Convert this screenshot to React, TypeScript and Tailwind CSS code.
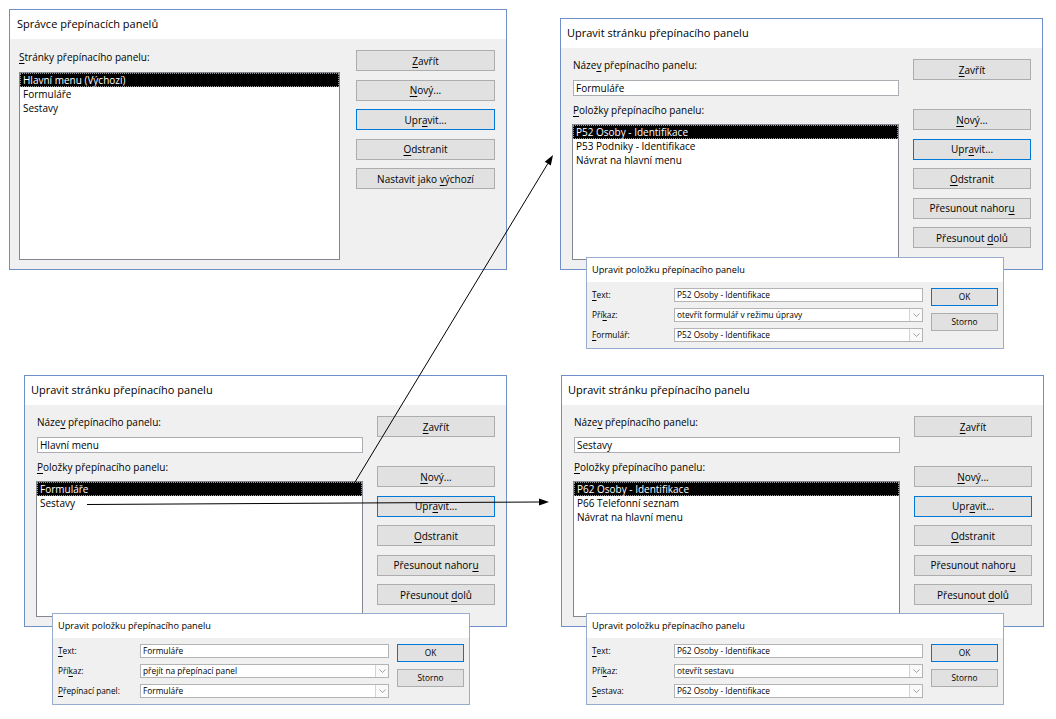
import React from "react";

const FONT = "font-['Open_Sans','Noto_Sans',sans-serif]";

function Mn({ t }: { t: string }) {
  const i = t.indexOf("&");
  if (i < 0) return <>{t}</>;
  return (
    <>
      {t.slice(0, i)}
      <span className="underline underline-offset-[1.5px] decoration-[0.8px]">{t[i + 1]}</span>
      {t.slice(i + 2)}
    </>
  );
}

function Btn({ label, focus, className = "" }: { label: string; focus?: boolean; className?: string }) {
  return (
    <div
      className={`h-[21px] shrink-0 flex items-center justify-center bg-[#e1e1e1] border ${
        focus ? "border-[#0078d7]" : "border-[#adadad]"
      } text-[10px] leading-none whitespace-nowrap ${className}`}
    >
      <span>
        <Mn t={label} />
      </span>
    </div>
  );
}

function SmallBtn({ label, focus }: { label: string; focus?: boolean }) {
  return (
    <div
      className={`h-[18px] shrink-0 flex items-center justify-center bg-[#e1e1e1] border ${
        focus ? "border-[#0078d7]" : "border-[#adadad]"
      } text-[8.3px] leading-none`}
    >
      {label}
    </div>
  );
}

function ListBox({ items, className = "" }: { items: string[]; className?: string }) {
  return (
    <div className={`bg-white border border-[#828790] overflow-hidden ${className}`}>
      {items.map((it, i) => (
        <div
          key={i}
          className={`h-[14px] leading-[14px] pl-[3px] text-[10px] whitespace-nowrap ${
            i === 0
              ? "bg-black text-white outline outline-1 outline-dotted outline-[#9a9a9a] -outline-offset-1"
              : "text-black"
          }`}
        >
          {it}
        </div>
      ))}
    </div>
  );
}

function Manager() {
  return (
    <div className="absolute left-[9px] top-[9px] w-[498px] h-[261px] border border-[#6f8fca] bg-[#f0f0f0] flex flex-col">
      <div className="h-[29px] shrink-0 bg-white flex items-center pl-[7px] text-[11px]">
        Správce přepínacích panelů
      </div>
      <div className="flex pl-[9px] pt-[11px]">
        <div className="w-[321px] flex flex-col">
          <div className="h-[14px] leading-[14px] text-[10px]">
            <Mn t="&Stránky přepínacího panelu:" />
          </div>
          <ListBox className="mt-[8px] h-[188px]" items={["Hlavní menu (Výchozí)", "Formuláře", "Sestavy"]} />
        </div>
        <div className="ml-[16px] w-[139px] flex flex-col gap-[8.5px]">
          <Btn label="&Zavřít" />
          <Btn label="&Nový..." />
          <Btn label="Upr&avit..." focus />
          <Btn label="&Odstranit" />
          <Btn label="Nastavit jako &výchozí" />
        </div>
      </div>
    </div>
  );
}

function EditPage({ pos, name, items }: { pos: string; name: string; items: string[] }) {
  return (
    <div className={`absolute ${pos} w-[483px] h-[252px] border border-[#6f8fca] bg-[#f0f0f0] flex flex-col`}>
      <div className="h-[29px] shrink-0 bg-white flex items-center pl-[6px] text-[11px]">
        Upravit stránku přepínacího panelu
      </div>
      <div className="flex pl-[12px]">
        <div className="w-[326px] flex flex-col pt-[10px]">
          <div className="h-[14px] leading-[14px] text-[10px]">
            <Mn t="Náze&v přepínacího panelu:" />
          </div>
          <div className="mt-[8px] h-[16px] bg-white border border-[#abadb3] text-[10px] leading-[14px] pl-[2px]">
            {name}
          </div>
          <div className="mt-[7px] h-[14px] leading-[14px] text-[10px]">
            <Mn t="&Položky přepínacího panelu:" />
          </div>
          <ListBox className="mt-[7px] h-[136px] -ml-[1px]" items={items} />
        </div>
        <div className="ml-[14px] w-[118px] flex flex-col pt-[11px]">
          <Btn label="&Zavřít" />
          <Btn label="&Nový..." className="mt-[29px]" />
          <Btn label="Upr&avit..." focus className="mt-[8.5px]" />
          <Btn label="&Odstranit" className="mt-[8.5px]" />
          <Btn label="Přesunout nahor&u" className="mt-[8.5px]" />
          <Btn label="Přesunout &dolů" className="mt-[8.5px]" />
        </div>
      </div>
    </div>
  );
}

function Field({ value, combo }: { value: string; combo?: boolean }) {
  return (
    <div className="w-[249px] h-[14px] bg-white border border-[#b4b4b4] flex items-stretch">
      <div className="flex-1 pl-[2px] text-[8.3px] leading-[12px] whitespace-nowrap overflow-hidden">{value}</div>
      {combo && (
        <div className="w-[13px] border-l border-[#d4d4d4] bg-[#fafafa] flex items-center justify-center">
          <svg width="7" height="4" viewBox="0 0 7 4">
            <path d="M0.5 0.5 L3.5 3.5 L6.5 0.5" fill="none" stroke="#8a8a8a" strokeWidth="0.8" />
          </svg>
        </div>
      )}
    </div>
  );
}

function Row({ label, children }: { label: string; children: React.ReactNode }) {
  return (
    <div className="flex items-center h-[14px]">
      <div className="w-[82px] text-[8.3px] leading-none whitespace-nowrap">
        <Mn t={label} />
      </div>
      {children}
    </div>
  );
}

function ItemDialog({
  pos,
  text,
  cmd,
  thirdLabel,
  thirdValue,
}: {
  pos: string;
  text: string;
  cmd: string;
  thirdLabel: string;
  thirdValue: string;
}) {
  return (
    <div className={`absolute ${pos} w-[418px] h-[92px] border border-[#98acd0] bg-[#f0f0f0] flex flex-col`}>
      <div className="h-[24px] shrink-0 bg-white flex items-center pl-[5px] text-[9.2px]">
        Upravit položku přepínacího panelu
      </div>
      <div className="flex pl-[5px] pt-[6px]">
        <div className="flex flex-col gap-[6px]">
          <Row label="&Text:">
            <Field value={text} />
          </Row>
          <Row label="Pří&kaz:">
            <Field value={cmd} combo />
          </Row>
          <Row label={thirdLabel}>
            <Field value={thirdValue} combo />
          </Row>
        </div>
        <div className="ml-[8px] w-[67px] flex flex-col gap-[7px]">
          <SmallBtn label="OK" focus />
          <SmallBtn label="Storno" />
        </div>
      </div>
    </div>
  );
}

export default function App() {
  return (
    <div className={`relative w-[1056px] h-[719px] bg-white overflow-hidden text-black ${FONT}`}>
      <Manager />
      <EditPage
        pos="left-[560px] top-[18px]"
        name="Formuláře"
        items={["P52 Osoby - Identifikace", "P53 Podniky - Identifikace", "Návrat na hlavní menu"]}
      />
      <ItemDialog
        pos="left-[586px] top-[257px]"
        text="P52 Osoby - Identifikace"
        cmd="otevřít formulář v režimu úpravy"
        thirdLabel="&Formulář:"
        thirdValue="P52 Osoby - Identifikace"
      />
      <EditPage pos="left-[24px] top-[375px]" name="Hlavní menu" items={["Formuláře", "Sestavy"]} />
      <ItemDialog
        pos="left-[52px] top-[613px]"
        text="Formuláře"
        cmd="přejít na přepínací panel"
        thirdLabel="&Přepínací panel:"
        thirdValue="Formuláře"
      />
      <EditPage
        pos="left-[561px] top-[375px]"
        name="Sestavy"
        items={["P62 Osoby - Identifikace", "P66 Telefonní seznam", "Návrat na hlavní menu"]}
      />
      <ItemDialog
        pos="left-[586px] top-[613px]"
        text="P62 Osoby - Identifikace"
        cmd="otevřít sestavu"
        thirdLabel="&Sestava:"
        thirdValue="P62 Osoby - Identifikace"
      />
      <svg className="absolute left-0 top-0 pointer-events-none" width="1056" height="719" viewBox="0 0 1056 719">
        <line x1="355" y1="482" x2="547.8" y2="163.6" stroke="#000" strokeWidth="1" />
        <polygon points="553,155 550.8,165.4 544.8,161.7" fill="#000" />
        <line x1="87" y1="504.5" x2="539" y2="502" stroke="#000" strokeWidth="1" />
        <polygon points="549,502 539,498.5 539,505.6" fill="#000" />
      </svg>
    </div>
  );
}
